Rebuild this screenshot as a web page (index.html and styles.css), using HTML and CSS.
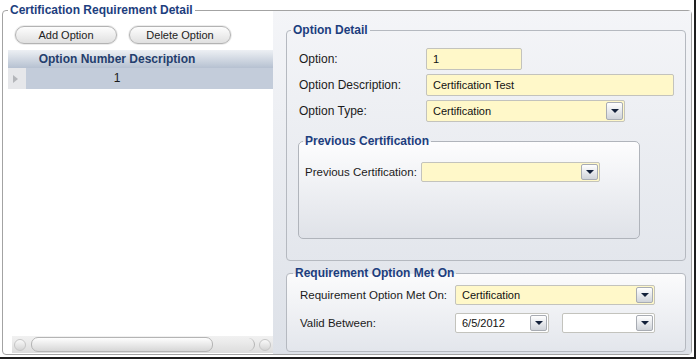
FILE: index.html
```html
<!DOCTYPE html>
<html lang="en">
<head>
    <meta charset="UTF-8">
    <meta name="viewport" content="width=device-width, initial-scale=1.0">
    <title>Certification Requirement Detail</title>
    <link rel="stylesheet" href="styles.css">
</head>
<body>
    <div class="frame">
        <fieldset class="group outer">
            <legend>Certification Requirement Detail</legend>
            <div class="split">
                <!-- option list -->
                <div class="list-pane">
                    <div class="toolbar">
                        <button class="pill">Add Option</button>
                        <button class="pill">Delete Option</button>
                    </div>
                    <div class="grid">
                        <div class="grid-head">
                            <span class="row-mark"></span>
                            <span class="head-cell">Option Number Description</span>
                        </div>
                        <div class="grid-row selected">
                            <span class="row-mark"><span class="arrow"></span></span>
                            <span class="head-cell">1</span>
                        </div>
                    </div>
                    <div class="list-fill"></div>
                    <div class="hscroll">
                        <span class="scroll-btn"></span>
                        <span class="thumb"></span>
                        <span class="track-end"></span>
                        <span class="scroll-btn"></span>
                    </div>
                </div>

                <!-- option detail -->
                <div class="detail-pane">
                    <fieldset class="group option-detail">
                        <legend>Option Detail</legend>
                        <div class="form">
                            <div class="field-row">
                                <span class="label">Option:</span>
                                <span class="input short">1</span>
                            </div>
                            <div class="field-row">
                                <span class="label">Option Description:</span>
                                <span class="input long">Certification Test</span>
                            </div>
                            <div class="field-row">
                                <span class="label">Option Type:</span>
                                <span class="combo type-combo"><span class="value">Certification</span><span class="drop"></span></span>
                            </div>

                            <fieldset class="group prev-cert">
                                <legend>Previous Certification</legend>
                                <div class="prev-body">
                                    <span class="prev-label">Previous Certification:</span>
                                    <span class="combo prev-combo"><span class="value"></span><span class="drop"></span></span>
                                </div>
                            </fieldset>
                        </div>
                    </fieldset>

                    <fieldset class="group met-on">
                        <legend>Requirement Option Met On</legend>
                        <div class="form met-form">
                            <div class="field-row small">
                                <span class="label wide">Requirement Option Met On:</span>
                                <span class="combo met-combo"><span class="value">Certification</span><span class="drop"></span></span>
                            </div>
                            <div class="field-row small">
                                <span class="label wide">Valid Between:</span>
                                <span class="combo date"><span class="value">6/5/2012</span><span class="drop"></span></span>
                                <span class="combo date date-to"><span class="value"></span><span class="drop"></span></span>
                            </div>
                        </div>
                    </fieldset>
                </div>
            </div>
        </fieldset>
    </div>
</body>
</html>
```

FILE: styles.css
```css
body {
    margin: 0;
    background: #fff;
    font-family: "Liberation Sans", Arial, sans-serif;
    font-size: 12px;
    color: #1b1b1b;
}

.frame {
    width: 696px;
    height: 359px;
    box-sizing: border-box;
    padding: 2px;
    border-right: 2px solid #1e1e1e;
    border-bottom: 2px solid #1e1e1e;
    display: flex;
}

.group {
    margin: 0;
    padding: 0;
    min-width: 0;
    border: 1px solid #b5b9c0;
    border-radius: 4px;
}

.group legend {
    padding: 0 2px;
    margin-left: 5px;
    font-weight: bold;
    font-size: 12px;
    line-height: 16px;
    color: #1d3e7e;
}

.outer {
    flex: 1;
    display: flex;
    flex-direction: column;
    background: #fff;
    border-color: #a3a3a3;
}

.split {
    flex: 1;
    display: flex;
    margin-top: -7px;
    padding-left: 5px;
    min-height: 0;
}

/* left list */
.list-pane {
    width: 265px;
    display: flex;
    flex-direction: column;
}

.toolbar {
    display: flex;
    gap: 12px;
    padding: 15px 0 0 7px;
}

.pill {
    width: 102px;
    height: 18px;
    padding: 0;
    border: 1px solid #b3b3b3;
    border-radius: 9px;
    background: linear-gradient(#fdfdfd, #e0e0e0);
    box-shadow: 0 0 0 1px #ececec;
    font-family: "Liberation Sans", Arial, sans-serif;
    font-size: 11px;
    color: #222;
}

.grid {
    margin-top: 6px;
}

.grid-head {
    display: flex;
    height: 18px;
    line-height: 18px;
    background: linear-gradient(#edf0f4, #b6c1d1);
    font-weight: bold;
    color: #243e6d;
}

.grid-row {
    display: flex;
    height: 21px;
    line-height: 21px;
}

.selected {
    background: #c3ccda;
}

.row-mark {
    width: 18px;
    display: flex;
    align-items: center;
    justify-content: center;
}

.grid-row .row-mark {
    background: #e6e7ea;
}

.arrow {
    border-left: 5px solid #b4b6ba;
    border-top: 4px solid transparent;
    border-bottom: 4px solid transparent;
    margin-left: -4px;
}

.head-cell {
    width: 182px;
    text-align: center;
}

.list-fill {
    flex: 1;
}

.hscroll {
    height: 17px;
    margin: 0 0 1px 4px;
    display: flex;
    align-items: center;
    background: linear-gradient(#f1f1f1 0, #ececec 30%, #dcdcdc 100%);
}

.scroll-btn {
    width: 10px;
    height: 10px;
    margin: 0 2px;
    border: 1px solid #c6c6c6;
    border-radius: 50%;
    background: linear-gradient(#fafafa, #d4d4d4);
}

.thumb {
    width: 180px;
    height: 13px;
    margin-left: 3px;
    border: 1px solid #b4b4b4;
    border-radius: 7px;
    background: linear-gradient(#fefefe, #d6d6d6);
}

.track-end {
    flex: 1;
    height: 13px;
    margin-right: 2px;
    border-right: 1px solid #b4b4b4;
    border-radius: 0 7px 7px 0;
}

/* right detail */
.detail-pane {
    flex: 1;
    display: flex;
    flex-direction: column;
    padding: 11px 5px 2px 13px;
    background: linear-gradient(#f4f5f8, #dde1e8);
}

.option-detail {
    flex: 1;
}

.option-detail legend {
    margin-left: 4px;
}

.form {
    display: flex;
    flex-direction: column;
    gap: 4px;
    padding: 10px 0 0 12px;
}

.field-row {
    display: flex;
    align-items: center;
    height: 22px;
}

.field-row.small {
    height: 20px;
}

.label {
    width: 127px;
    white-space: nowrap;
}

.label.wide {
    width: 155px;
    font-size: 11.5px;
}

.input,
.combo {
    box-sizing: border-box;
    height: 22px;
    border: 1px solid #c3c3bd;
    border-radius: 2px;
    background: #fff8c9;
    font-size: 11px;
    color: #111;
}

.input {
    padding: 0 6px;
    line-height: 20px;
}

.short {
    width: 96px;
}

.long {
    width: 248px;
}

.combo {
    display: flex;
    padding: 1px;
}

.combo .value {
    flex: 1;
    padding-left: 5px;
    line-height: 18px;
}

.drop {
    width: 15px;
    border: 1px solid #a8acb3;
    border-radius: 2px;
    background: linear-gradient(#ffffff, #d0d4da);
    display: flex;
    align-items: center;
    justify-content: center;
}

.drop::after {
    content: "";
    border-top: 4px solid #13213a;
    border-left: 4px solid transparent;
    border-right: 4px solid transparent;
}

.type-combo {
    width: 199px;
}

.prev-cert {
    width: 340px;
    margin: 7px 0 0 -1px;
    background: linear-gradient(#fdfdfe, #dfe2e8);
    border-color: #b0b4bb;
    border-radius: 5px;
}

.prev-body {
    display: flex;
    align-items: flex-start;
    height: 76px;
    padding: 13px 0 0 6px;
}

.prev-label {
    width: 116px;
    white-space: nowrap;
    font-size: 11.5px;
    line-height: 20px;
}

.prev-combo {
    width: 179px;
    height: 20px;
}

.prev-combo .value {
    line-height: 16px;
}

.met-on {
    margin-top: 4px;
    background: linear-gradient(#fbfbfc, #e3e6ec);
}

.met-on legend {
    margin-left: 6px;
}

.met-form {
    gap: 8px;
    padding: 4px 0 18px 13px;
}

.met-combo {
    width: 200px;
    height: 20px;
}

.met-form .value {
    line-height: 16px;
}

.date {
    width: 94px;
    height: 20px;
    background: #fff;
}

.date-to {
    width: 93px;
    margin-left: 13px;
}
```
